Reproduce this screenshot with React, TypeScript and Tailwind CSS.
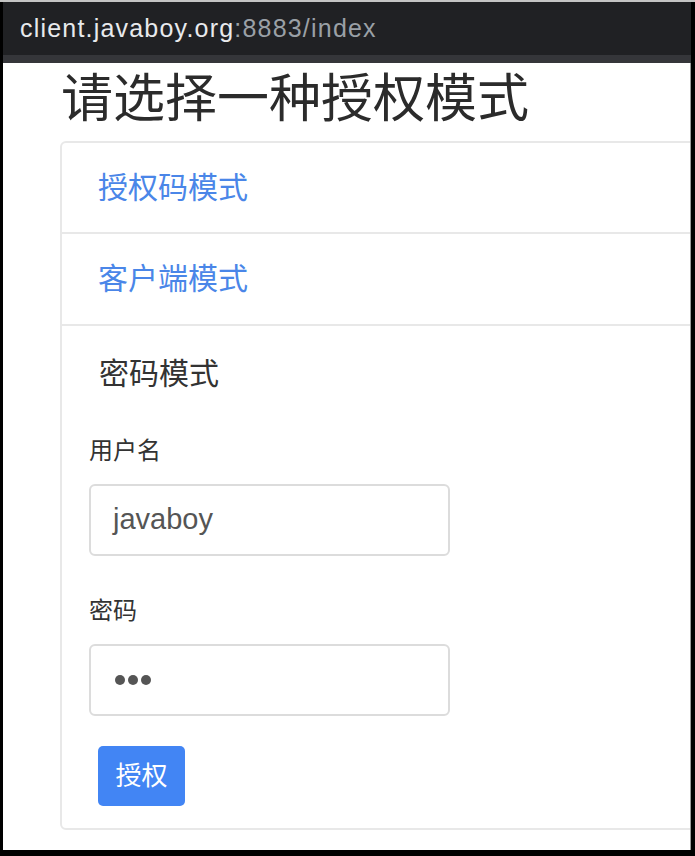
import React from 'react';

const font = { fontFamily: '"Liberation Sans", "Noto Sans CJK SC", sans-serif' };

const App: React.FC = () => {
    return (
        <div
            className="w-[695px] h-[856px] bg-black pl-[3px] pr-[4px] pb-[6px] border-t-2 border-[#c4c4c4] flex flex-col overflow-hidden"
            style={font}
        >
            <div className="h-[53px] bg-[#202124] flex items-center pl-[17px] shrink-0">
                <span className="text-[25px] tracking-[1.2px] leading-none">
                    <span className="text-[#e8eaed]">client.javaboy.org</span>
                    <span className="text-[#9aa0a6]">:8883/index</span>
                </span>
            </div>
            <div className="h-[8px] bg-[#35363a] shrink-0" />
            <div className="flex-1 bg-white border-r border-[#9a9a9a] overflow-hidden">
                <h1 className="mt-[10px] ml-[58px] text-[52px] leading-[52px] text-[#2b2b2b] whitespace-nowrap">
                    请选择一种授权模式
                </h1>
                <div className="mt-[16px] ml-[57px] w-[700px] border-2 border-[#e8e8e8] rounded-[6px]">
                    <div className="h-[91px] flex items-center pl-[36px] border-b-2 border-[#e8e8e8]">
                        <span className="text-[30px] leading-[30px] text-[#4a86e8]">授权码模式</span>
                    </div>
                    <div className="h-[92px] flex items-center pl-[36px] border-b-2 border-[#e8e8e8]">
                        <span className="text-[30px] leading-[30px] text-[#4a86e8]">客户端模式</span>
                    </div>
                    <div className="pt-[33px] pb-[22px] pl-[27px]">
                        <div className="ml-[10px] text-[30px] leading-[30px] text-[#333]">密码模式</div>
                        <div className="mt-[50px] text-[24px] leading-[24px] text-[#333]">用户名</div>
                        <div className="mt-[21px] w-[361px] h-[72px] border-2 border-[#dcdcdc] rounded-[6px] flex items-center pl-[22px]">
                            <span className="text-[29px] text-[#555]">javaboy</span>
                        </div>
                        <div className="mt-[43px] text-[24px] leading-[24px] text-[#333]">密码</div>
                        <div className="mt-[21px] w-[361px] h-[72px] border-2 border-[#dcdcdc] rounded-[6px] flex items-center pl-[24px] gap-[3px]">
                            <span className="w-[10px] h-[10px] rounded-full bg-[#555]" />
                            <span className="w-[10px] h-[10px] rounded-full bg-[#555]" />
                            <span className="w-[10px] h-[10px] rounded-full bg-[#555]" />
                        </div>
                        <button className="mt-[30px] ml-[9px] w-[87px] h-[60px] rounded-[5px] bg-[#4285f4] text-white text-[26px] flex items-center justify-center">
                            授权
                        </button>
                    </div>
                </div>
            </div>
        </div>
    );
};

export default App;
